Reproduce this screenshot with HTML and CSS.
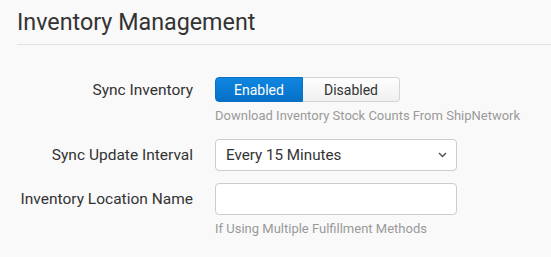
FILE: index.html
```html
<!DOCTYPE html>
<html lang="en">
<head>
  <meta charset="UTF-8">
  <title>Inventory Management</title>
  <link rel="stylesheet" href="styles.css">
</head>
<body>

<section class="panel">
  <h2 class="panel-title">Inventory Management</h2>

  <div class="form-row">
    <label class="form-label short">Sync Inventory</label>
    <div class="form-field">
      <div class="toggle">
        <button class="toggle-btn active">Enabled</button>
        <button class="toggle-btn">Disabled</button>
      </div>
      <div class="help">Download Inventory Stock Counts From ShipNetwork</div>
    </div>
  </div>

  <div class="form-row">
    <label class="form-label">Sync Update Interval</label>
    <div class="form-field">
      <div class="select-wrap">
        <select class="input">
          <option>Every 15 Minutes</option>
          <option>Every 30 Minutes</option>
          <option>Every Hour</option>
        </select>
        <svg class="caret" width="9" height="6" viewBox="0 0 9 6"><path d="M1 1l3.5 3.5L8 1" fill="none" stroke="#555" stroke-width="1.5"/></svg>
      </div>
    </div>
  </div>

  <div class="form-row">
    <label class="form-label">Inventory Location Name</label>
    <div class="form-field">
      <input class="input" type="text">
      <div class="help">If Using Multiple Fulfillment Methods</div>
    </div>
  </div>
</section>

</body>
</html>
```

FILE: styles.css
```css
body {
  margin: 0;
  background: #f9f9f9;
  font-family: Roboto, "Liberation Sans", sans-serif;
  color: #333;
}

.panel {
  padding: 8px 0 0 17px;
}

.panel-title {
  margin: 0;
  font-size: 23.3px;
  font-weight: 400;
  color: #333;
  line-height: 28px;
  padding-bottom: 8px;
  border-bottom: 1px solid #e2e2e2;
}

/* Form rows */
.form-row {
  display: flex;
  align-items: flex-start;
  gap: 22px;
}

.form-row:first-of-type {
  margin-top: 32px;
}

.form-row + .form-row {
  margin-top: 16px;
}

.form-row + .form-row + .form-row {
  margin-top: 12px;
}

.form-label {
  width: 176px;
  text-align: right;
  font-size: 15.5px;
  line-height: 32px;
  color: #333;
}

.form-label.short {
  line-height: 27px;
}

.form-field {
  display: flex;
  flex-direction: column;
}

.help {
  font-size: 13px;
  color: #999;
  margin-top: 6px;
  line-height: 15px;
}

/* Enabled / Disabled toggle */
.toggle {
  display: flex;
}

.toggle-btn {
  font-family: inherit;
  font-size: 14px;
  height: 25px;
  padding: 0;
  border: 1px solid #d4d4d4;
  background: linear-gradient(#fefefe, #f0f0f0);
  color: #333;
  cursor: pointer;
}

.toggle-btn:first-child {
  width: 88px;
  border-radius: 4px 0 0 4px;
}

.toggle-btn:last-child {
  width: 97px;
  border-left: none;
  border-radius: 0 4px 4px 0;
}

.toggle-btn.active {
  background: linear-gradient(#0f86e0, #0670c8);
  border-color: #0b6fc2;
  color: #fff;
}

/* Select and text input */
.input {
  box-sizing: border-box;
  width: 242px;
  height: 32px;
  border: 1px solid #ccc;
  border-radius: 4px;
  background: #fff;
  font-family: inherit;
  font-size: 15.2px;
  color: #333;
  padding: 0 10px;
}

.select-wrap {
  position: relative;
}

.select-wrap select {
  appearance: none;
  -webkit-appearance: none;
}

.caret {
  position: absolute;
  right: 10px;
  top: 13px;
  pointer-events: none;
}
```
